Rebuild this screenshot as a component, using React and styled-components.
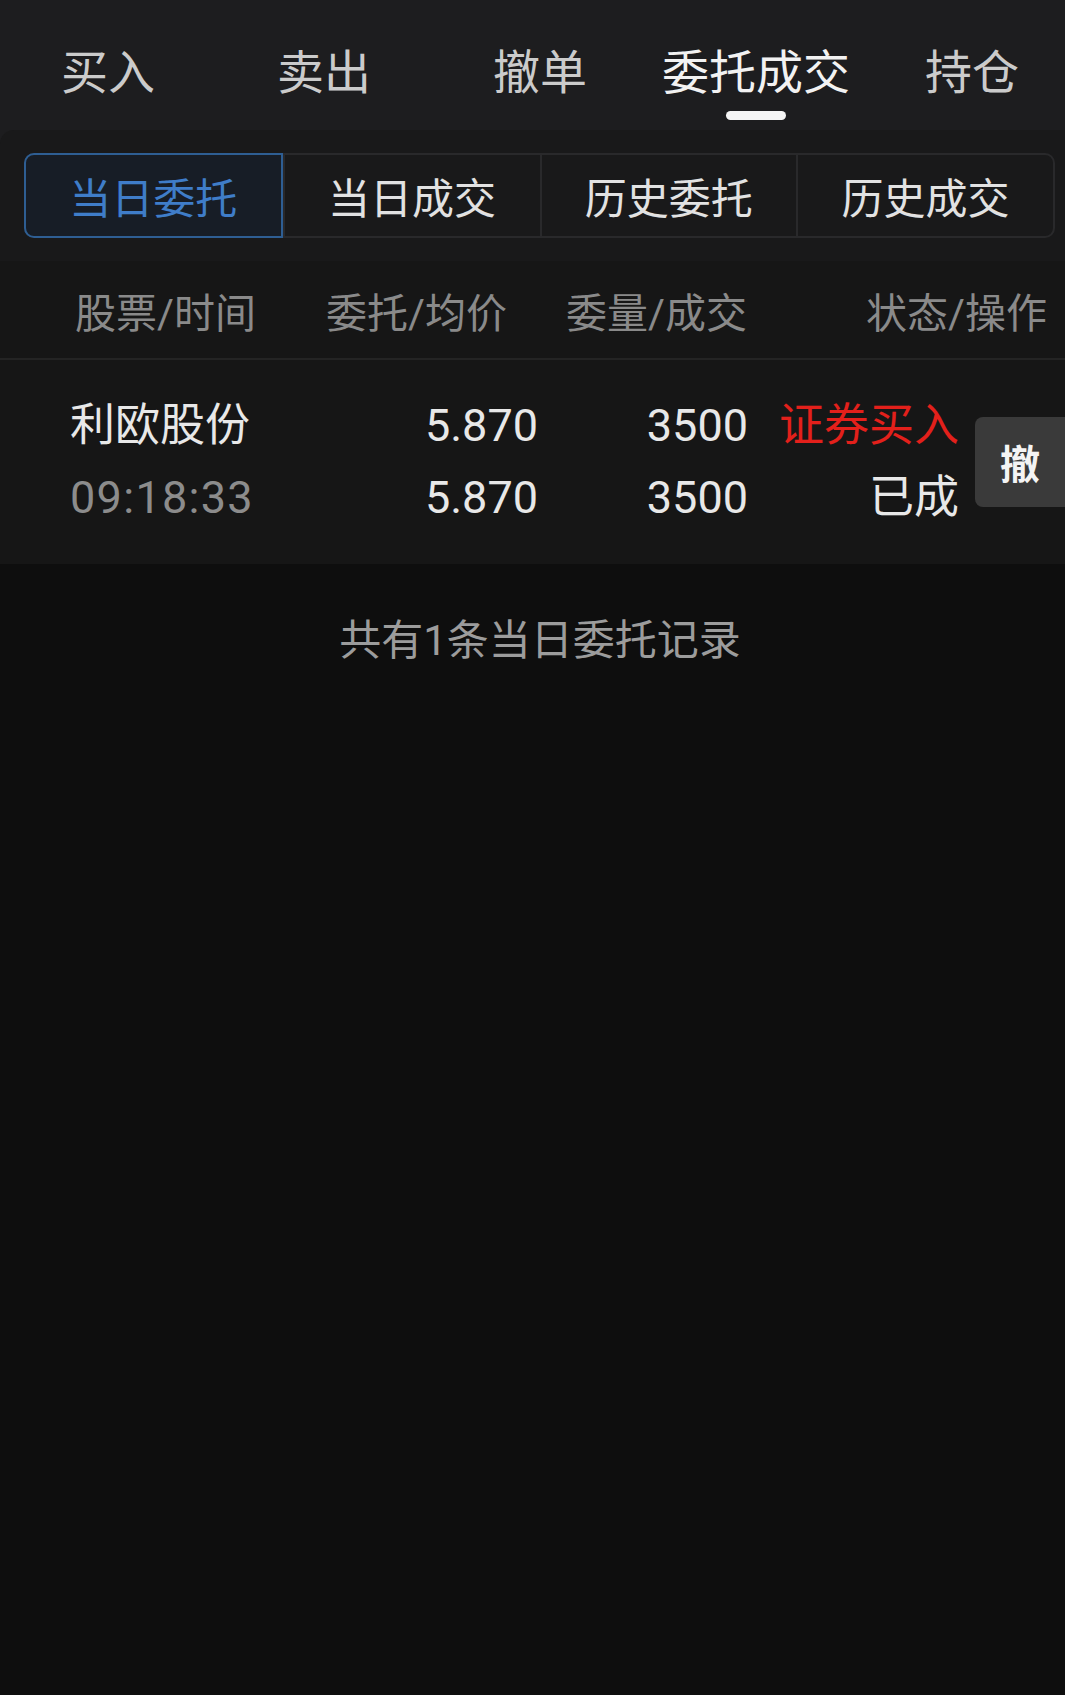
import React from "react"
import styled, { createGlobalStyle } from "styled-components"

const GlobalStyle = createGlobalStyle`
  html, body {
    margin: 0;
    padding: 0;
    background: #0e0e0e;
  }
  body {
    font-family: Roboto, "Noto Sans CJK SC", sans-serif;
    -webkit-font-smoothing: antialiased;
  }
`

const NAV_ITEMS = ["买入", "卖出", "撤单", "委托成交", "持仓"]
const SUB_TABS = ["当日委托", "当日成交", "历史委托", "历史成交"]
const HEADERS = ["股票/时间", "委托/均价", "委量/成交", "状态/操作"]

const orders = [
  {
    name: "利欧股份",
    time: "09:18:33",
    price: "5.870",
    avg: "5.870",
    qty: "3500",
    filled: "3500",
    side: "证券买入",
    status: "已成",
  },
]

const Page = styled.div`
  width: 1065px;
  min-height: 1695px;
  background: #0e0e0e;
  display: flex;
  flex-direction: column;
  overflow: hidden;
`

// nav strip is slightly wider than the screen, like a scrollable tab bar
const TopBar = styled.nav`
  background: #1d1d1f;
  height: 130px;
  display: grid;
  grid-template-columns: repeat(5, 216px);
  overflow: hidden;
`

const NavItem = styled.div`
  position: relative;
  display: flex;
  justify-content: center;
  padding-top: 44px;
  font-size: 47px;
  line-height: 58px;
  color: ${props => (props.active ? "#f2f2f2" : "#cbcbcb")};

  &::after {
    content: "";
    display: ${props => (props.active ? "block" : "none")};
    position: absolute;
    left: 50%;
    top: 111px;
    width: 60px;
    height: 9px;
    margin-left: -30px;
    border-radius: 5px;
    background: #f5f5f5;
  }
`

const TabPanel = styled.div`
  background: #1d1d1f;
`

const TabPanelInner = styled.div`
  background: #19191a;
  border-top-left-radius: 14px;
  padding: 23px 10px 23px 24px;
`

const Segmented = styled.div`
  display: grid;
  grid-template-columns: repeat(4, 1fr);
  height: 81px;
  border: 2px solid #29292b;
  border-radius: 10px;
`

const SubTab = styled.div`
  display: flex;
  align-items: center;
  justify-content: center;
  font-size: 42px;
  color: ${props => (props.active ? "#3f7dc9" : "#e2e2e2")};
  background: ${props => (props.active ? "#171d26" : "transparent")};
  border-left: ${props => (props.first ? "none" : "2px solid #29292b")};

  ${props =>
    props.active &&
    `
    margin: -2px 0 -2px -2px;
    border: 2px solid #2e5e93;
    border-radius: 10px 0 0 10px;
  `}
`

const HeaderRow = styled.div`
  display: grid;
  grid-template-columns: 251px 240px 300px 1fr;
  align-items: center;
  height: 97px;
  padding-left: 75px;
  background: #161616;
  border-bottom: 2px solid #242424;
`

const HeaderCell = styled.div`
  font-size: 41px;
  color: #8a8a8a;
  white-space: nowrap;
`

const OrderRow = styled.div`
  display: grid;
  grid-template-columns: 220px 248px 210px 211px 1fr;
  align-items: center;
  height: 204px;
  padding-left: 70px;
  background: #161616;
`

const Cell = styled.div`
  display: flex;
  flex-direction: column;
  align-items: ${props => (props.right ? "flex-end" : "flex-start")};
`

const Line = styled.div`
  font-size: 45px;
  line-height: 72px;
  white-space: nowrap;
  letter-spacing: ${props => (props.spaced ? "1.3px" : "0")};
  color: ${props => props.color || "#e8e8e8"};
`

const CancelButton = styled.button`
  width: 90px;
  height: 90px;
  border: none;
  padding: 0;
  border-radius: 8px 0 0 8px;
  background: #3a3a3a;
  color: #f4f4f4;
  font-family: "Noto Sans CJK SC", sans-serif;
  font-size: 40px;
  font-weight: 700;
  justify-self: end;
`

const Summary = styled.div`
  padding: 50px 0 0 15px;
  text-align: center;
  font-size: 42px;
  line-height: 54px;
  color: #9c9c9c;
`

export default function App() {
  const activeNav = 3
  const activeTab = 0

  return (
    <>
      <GlobalStyle />
      <Page>
        <TopBar>
          {NAV_ITEMS.map((item, i) => (
            <NavItem key={item} active={i === activeNav}>
              {item}
            </NavItem>
          ))}
        </TopBar>

        <TabPanel>
          <TabPanelInner>
            <Segmented>
              {SUB_TABS.map((tab, i) => (
                <SubTab key={tab} first={i === 0} active={i === activeTab}>
                  {tab}
                </SubTab>
              ))}
            </Segmented>
          </TabPanelInner>
        </TabPanel>

        <HeaderRow>
          {HEADERS.map(h => (
            <HeaderCell key={h}>{h}</HeaderCell>
          ))}
        </HeaderRow>

        {orders.map(o => (
          <OrderRow key={o.name + o.time}>
            <Cell>
              <Line>{o.name}</Line>
              <Line color="#8c8c8c" spaced>
                {o.time}
              </Line>
            </Cell>
            <Cell right>
              <Line>{o.price}</Line>
              <Line>{o.avg}</Line>
            </Cell>
            <Cell right>
              <Line>{o.qty}</Line>
              <Line>{o.filled}</Line>
            </Cell>
            <Cell right>
              <Line color="#e3201b">{o.side}</Line>
              <Line>{o.status}</Line>
            </Cell>
            <CancelButton>撤</CancelButton>
          </OrderRow>
        ))}

        <Summary>共有{orders.length}条当日委托记录</Summary>
      </Page>
    </>
  )
}
